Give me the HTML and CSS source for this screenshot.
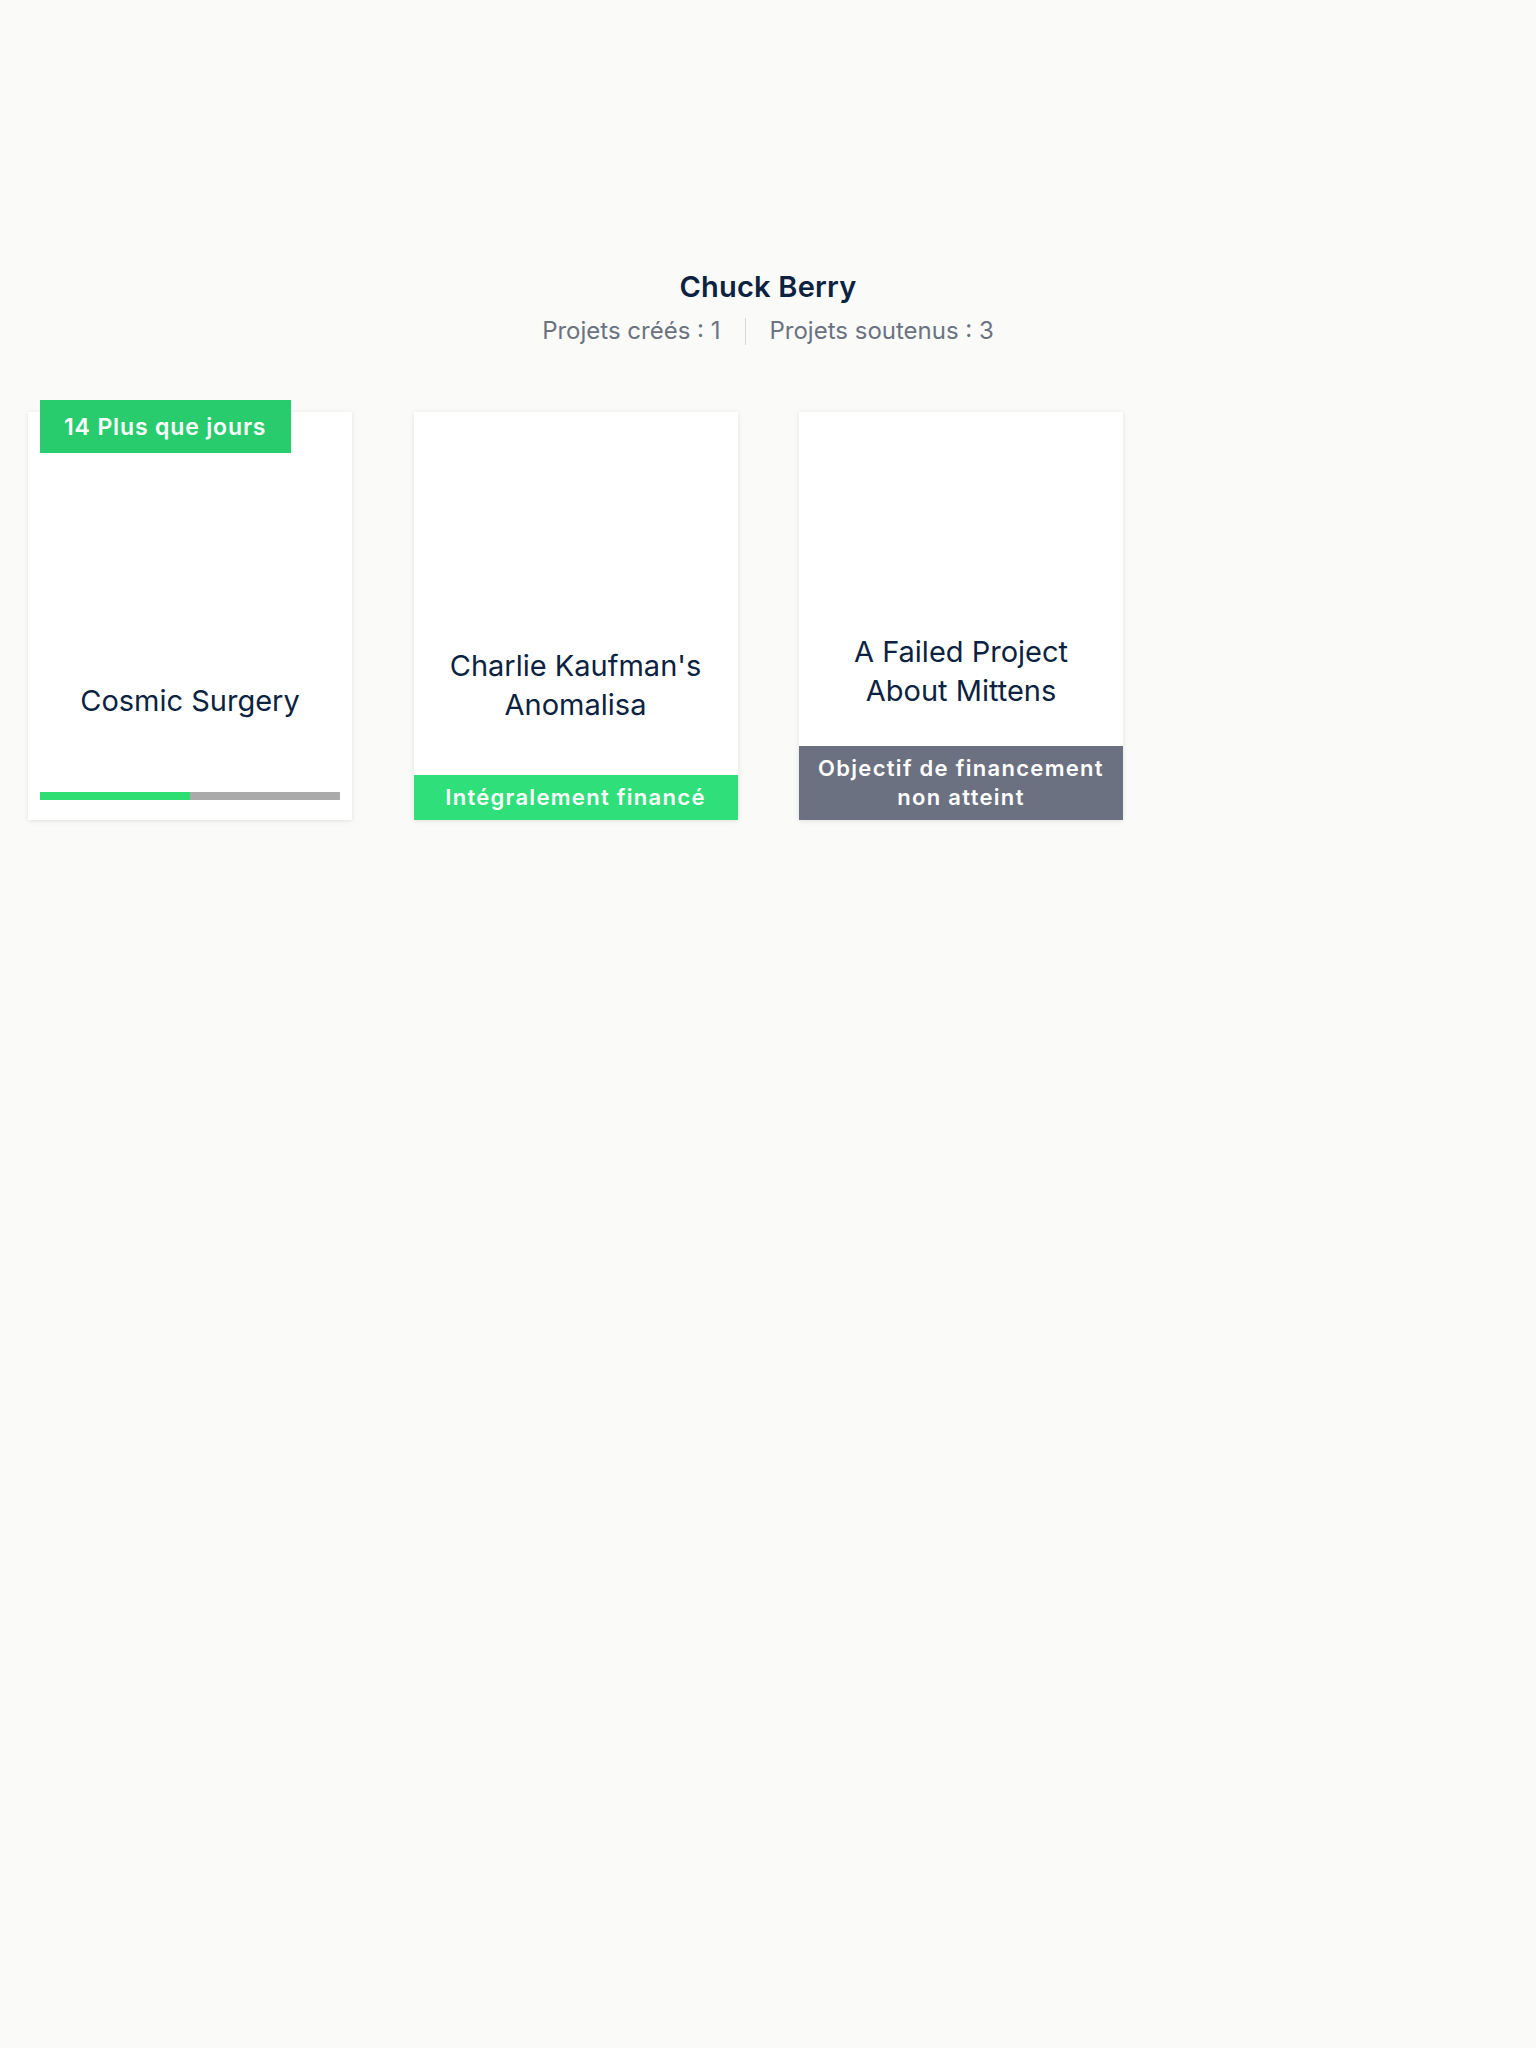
FILE: index.html
```html
<!DOCTYPE html>
<html lang="fr">
<head>
<meta charset="utf-8">
<title>Chuck Berry</title>
<link rel="stylesheet" href="styles.css">
</head>
<body>
<main class="page">
  <header class="profile">
    <h1 class="profile-name">Chuck Berry</h1>
    <div class="profile-stats">
      <span class="stat">Projets créés : 1</span>
      <span class="stat-divider"></span>
      <span class="stat">Projets soutenus : 3</span>
    </div>
  </header>
  <section class="cards">
    <article class="card">
      <div class="badge">14 Plus que jours</div>
      <div class="card-image"></div>
      <div class="card-body card-body-progress">
        <h2 class="card-title">Cosmic Surgery</h2>
      </div>
      <div class="progress-wrap">
        <div class="progress"><div class="progress-fill" style="width:50%"></div></div>
      </div>
    </article>
    <article class="card">
      <div class="card-image"></div>
      <div class="card-body">
        <h2 class="card-title">Charlie Kaufman's<br>Anomalisa</h2>
      </div>
      <div class="status status-funded">Intégralement financé</div>
    </article>
    <article class="card">
      <div class="card-image"></div>
      <div class="card-body">
        <h2 class="card-title">A Failed Project<br>About Mittens</h2>
      </div>
      <div class="status status-failed">Objectif de financement<br>non atteint</div>
    </article>
  </section>
</main>
</body>
</html>
```
FILE: styles.css
```css
* { box-sizing: border-box; }
html, body { margin: 0; padding: 0; }
body {
  background: #fafaf8;
  font-family: Inter, "Noto Sans", "Liberation Sans", sans-serif;
  color: #0b2341;
  min-height: 2048px;
}
.page { padding-top: 269px; }
.profile { text-align: center; }
.profile-name {
  margin: 0;
  font-size: 29px;
  line-height: 36px;
  font-weight: 600;
  letter-spacing: 0.2px;
  color: #0b2341;
}
.profile-stats {
  margin-top: 11px;
  display: flex;
  justify-content: center;
  align-items: center;
  gap: 24px;
  font-size: 24px;
  line-height: 30px;
  color: #6b7280;
}
.stat-divider {
  width: 1px;
  height: 27px;
  background: #d4d6dc;
}
.cards {
  margin-top: 66px;
  padding-left: 28px;
  display: flex;
  gap: 61.5px;
}
.card {
  position: relative;
  width: 324px;
  height: 408px;
  background: #fff;
  box-shadow: 0 1px 5px rgba(0,0,0,0.10);
  display: flex;
  flex-direction: column;
}
.badge {
  position: absolute;
  top: -12px;
  left: 12px;
  width: 251px;
  height: 53px;
  background: #28cc6c;
  color: #fff;
  font-weight: 600;
  font-size: 23px;
  line-height: 54px;
  padding-left: 24px;
  letter-spacing: 0.85px;
}
.card-image { height: 183px; flex: none; }
.card-body {
  flex: 1;
  display: flex;
  align-items: center;
  justify-content: center;
  text-align: center;
}
.card-body-progress { padding-top: 13px; }
.card-title {
  margin: 0;
  font-size: 29px;
  font-weight: 400;
  line-height: 39px;
  color: #0b2341;
}
.progress-wrap { padding: 0 12px 20px; flex: none; }
.progress {
  height: 8px;
  background: #aaaaaa;
}
.progress-fill { height: 100%; background: #2ede73; }
.status {
  flex: none;
  color: #fff;
  font-weight: 600;
  text-align: center;
  font-size: 22px;
  letter-spacing: 1.3px;
}
.status-funded {
  background: #2edf7a;
  height: 45px;
  line-height: 45px;
}
.status-failed {
  background: #6b7181;
  line-height: 29px;
  padding: 8px 0;
}
```
